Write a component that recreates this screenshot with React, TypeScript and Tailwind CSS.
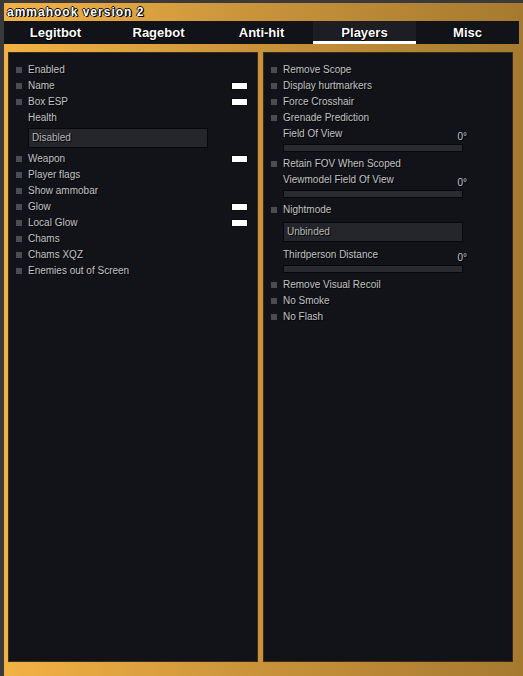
import React from "react";

const font = "font-['Liberation_Sans',Arial,sans-serif]";

function Check({ label, swatch }: { label: string; swatch?: boolean }) {
  return (
    <div className="flex h-[16px] items-center">
      <div className="ml-[7px] h-[6px] w-[6px] bg-[#4b4b53]" />
      <span className="ml-[6px] text-[10px] leading-none text-[#c4c4c4] [text-shadow:1px_1px_0_#000]">{label}</span>
      {swatch && <div className="ml-auto mr-[9px] h-[8px] w-[17px] border border-[#0a0a0a] bg-white" />}
    </div>
  );
}

function Label({ label, value }: { label: string; value?: string }) {
  return (
    <div className="flex h-[16px] items-center pl-[19px] pr-[45px]">
      <span className="text-[10px] leading-none text-[#c4c4c4] [text-shadow:1px_1px_0_#000]">{label}</span>
      {value && (
        <span className="ml-auto mt-[6px] text-[10px] leading-none text-[#c4c4c4] [text-shadow:1px_1px_0_#000]">{value}</span>
      )}
    </div>
  );
}

function Slider() {
  return <div className="ml-[19px] mt-[2px] mb-[4px] h-[8px] w-[180px] border border-[#08080a] bg-[#2a2b30]" />;
}

function Drop({ text }: { text: string }) {
  return (
    <div className="ml-[19px] flex h-[20px] w-[180px] items-center border border-[#08080a] bg-[#25262b] pl-[3px]">
      <span className="text-[10px] leading-none text-[#b8b8b8] [text-shadow:1px_1px_0_#000]">{text}</span>
    </div>
  );
}

const tabs = ["Legitbot", "Ragebot", "Anti-hit", "Players", "Misc"];

export default function App() {
  return (
    <div className={`${font} h-[676px] w-[523px] overflow-hidden bg-[#3a3a3c] pt-[3px] pl-[4px]`}>
      <div className="flex h-[673px] w-[519px] flex-col bg-[linear-gradient(90deg,#f2b244,#c8923a_50%,#a57a30)]">
        <div className="flex h-[18px] items-center pl-[3px]">
          <span className="text-[12px] font-bold leading-none tracking-[1px] text-white [text-shadow:1px_1px_0_#000,-1px_0_0_#000,0_-1px_0_#000,1px_0_0_#000]">
            ammahook version 2
          </span>
        </div>
        <div className="flex h-[23px] w-[515px] bg-[#121318]">
          {tabs.map((t) => {
            const active = t === "Players";
            return (
              <div
                key={t}
                className={`relative flex flex-1 items-center justify-center ${active ? "bg-[#1d1e24]" : ""}`}
              >
                <span className="text-[13px] font-bold leading-none text-white [text-shadow:1px_1px_0_#000,-1px_0_0_#000,0_1px_0_#000]">
                  {t}
                </span>
                {active && <div className="absolute bottom-0 left-0 right-0 h-[3px] bg-white" />}
              </div>
            );
          })}
        </div>
        <div className="ml-[4px] mt-[8px] flex gap-[5px]">
          <div className="h-[610px] w-[250px] border border-[#3a2d17] bg-[#121319] pt-[9px]">
            <Check label="Enabled" />
            <Check label="Name" swatch />
            <Check label="Box ESP" swatch />
            <Label label="Health" />
            <div className="mt-[2px] mb-[3px]">
              <Drop text="Disabled" />
            </div>
            <Check label="Weapon" swatch />
            <Check label="Player flags" />
            <Check label="Show ammobar" />
            <Check label="Glow" swatch />
            <Check label="Local Glow" swatch />
            <Check label="Chams" />
            <Check label="Chams XQZ" />
            <Check label="Enemies out of Screen" />
          </div>
          <div className="h-[610px] w-[250px] border border-[#3a2d17] bg-[#121319] pt-[9px]">
            <Check label="Remove Scope" />
            <Check label="Display hurtmarkers" />
            <Check label="Force Crosshair" />
            <Check label="Grenade Prediction" />
            <Label label="Field Of View" value="0°" />
            <Slider />
            <Check label="Retain FOV When Scoped" />
            <Label label="Viewmodel Field Of View" value="0°" />
            <Slider />
            <Check label="Nightmode" />
            <div className="mt-[4px] mb-[5px]">
              <Drop text="Unbinded" />
            </div>
            <Label label="Thirdperson Distance" value="0°" />
            <Slider />
            <Check label="Remove Visual Recoil" />
            <Check label="No Smoke" />
            <Check label="No Flash" />
          </div>
        </div>
      </div>
    </div>
  );
}
